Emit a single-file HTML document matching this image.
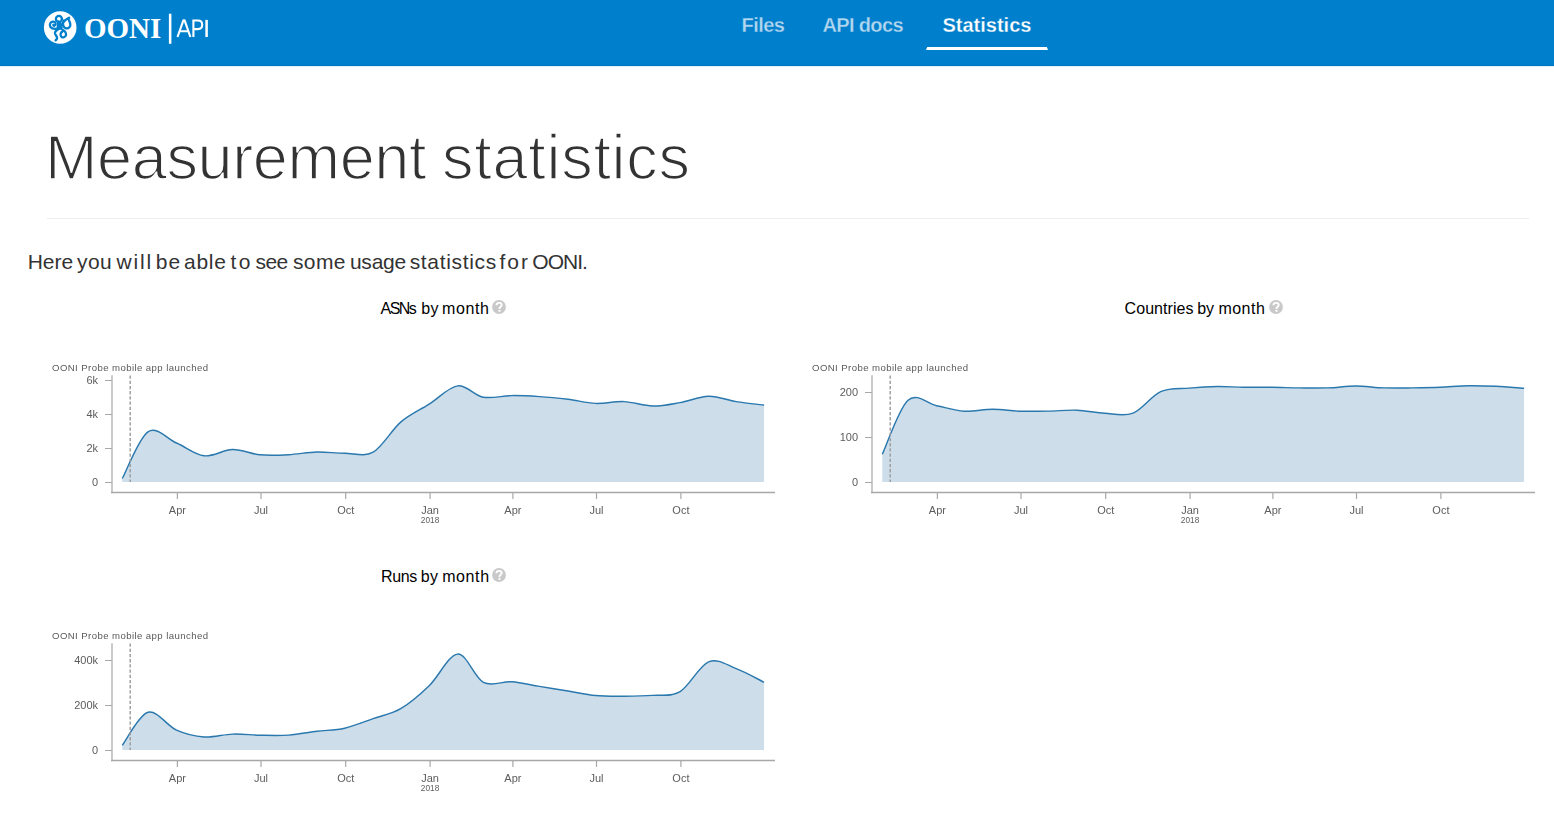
<!DOCTYPE html>
<html><head><meta charset="utf-8">
<style>
html,body{margin:0;padding:0;background:#fff;width:1554px;height:820px;overflow:hidden;position:relative;}
body{font-family:"Liberation Sans",sans-serif;}
.hdr{position:absolute;left:0;top:0;width:1554px;height:66px;background:#0080cc;}
.abs{position:absolute;white-space:nowrap;}
.nav{font-family:"Liberation Sans",sans-serif;font-weight:bold;font-size:20px;line-height:20px;color:#b3d7ef;-webkit-text-stroke:0.3px #0080cc;transform-origin:0 0;}
.ul{position:absolute;left:926px;top:47px;width:122px;height:3px;background:#fff;clip-path:polygon(1.2px 0,120.8px 0,122px 3px,0 3px);}
.title{font-size:63px;line-height:64px;color:#333;-webkit-text-stroke:1.6px #fff;}
.hr{position:absolute;left:47px;top:218px;width:1482px;height:1px;background:#eee;}
.intro{font-size:21px;line-height:21px;color:#333;}
.ct{font-size:16px;line-height:16px;color:#000;}
.q{position:absolute;width:14px;height:14px;}
svg text{font-family:"Liberation Sans",sans-serif;}
.tl{font-size:11px;fill:#5c5c5c;}
.ty{font-size:8.3px;fill:#5c5c5c;}
.ta{font-size:9.6px;fill:#5a5a5a;}
</style></head><body>
<div class="hdr"></div><div style="position:absolute;left:0;top:65px;width:1554px;height:1px;background:#0075c4"></div><div style="position:absolute;left:0;top:66px;width:1554px;height:1px;background:#e3f0f9"></div>
<svg class="abs" style="left:0;top:0" width="1554" height="66" viewBox="0 0 1554 66">

<circle cx="60.2" cy="27.5" r="16.3" fill="#fff"/>
<g fill="none" stroke="#0080cc" stroke-width="2.3" stroke-linecap="round">
<circle cx="58.9" cy="18.9" r="3.0"/>
<path d="M58.2,21.5 C57.8,24 59.5,25.5 59.8,28"/>
<path d="M59.5,27.8 C57,29.2 52.5,29.6 50.5,27 C48.8,24.6 50.6,21.3 53.5,21.6 C56,21.9 56.3,24.6 54.6,25.6 C53.8,26 53.2,25.4 53.4,24.8"/>
<path d="M60.8,26 C62.5,24 63.5,21.5 65.5,20 C67,19 68,18.5 69.2,17.8 M63.6,20.5 C62.4,23.5 63,27.4 65.8,28.3 C68.8,29 71,26.5 70.2,23.5 C69.6,21.5 68.6,20 68.6,18.8"/>
<path d="M59.5,28.5 C57,29.8 54.5,31 55,33.5 C55.5,35.5 57.5,36.2 57,38.5 C56.8,39.5 56,40 55.5,40.4"/>
<path d="M60.5,28.5 C63.8,30 66.5,32 66,35 C65.5,37.8 62,38.2 61,36.2 C60,34.2 60.8,32.4 62.4,31.6"/>
</g>
<path d="M57,22 L61.3,22 L62.8,27.5 C62.8,29.5 56.6,29.5 56.6,27.5 Z" fill="#0080cc"/>

<text x="84" y="37.7" style="font-family:'Liberation Serif',serif;font-weight:bold;font-size:29px" fill="#fff">OONI</text>
<rect x="168.9" y="13.7" width="2.5" height="30.1" fill="#fff"/>
<g fill="none" stroke="#fff" stroke-width="2.1">
<path d="M177.5,37 L183.4,20.3 H184.6 L190.4,37 M180.2,31.2 H187.6" stroke-linejoin="round"/>
<path d="M193.4,37 V20.5 H197.8 C200.6,20.5 202.2,22.2 202.2,24.8 C202.2,27.4 200.6,29.1 197.8,29.1 H193.4"/>
<path d="M206.6,19.9 V37" stroke-width="2.5"/>
</g>
</svg>
<div class="abs nav" id="n1" style="left:741.5px;top:15px;letter-spacing:-0.55px">Files</div>
<div class="abs nav" id="n2" style="left:822.5px;top:15px;letter-spacing:-0.65px">API docs</div>
<div class="abs nav" id="n3" style="left:942.5px;top:15px;color:#fff;letter-spacing:0px">Statistics</div>
<div class="ul"></div>
<div class="abs title" id="ttl" style="left:45px;top:124.5px"><span style="letter-spacing:-0.37px">Measurement</span> <span style="letter-spacing:0.72px;margin-left:-1.6px">statistics</span></div>
<div class="hr"></div>
<span class="abs intro" style="left:27.7px;top:251px;letter-spacing:0.00px">Here</span><span class="abs intro" style="left:77.0px;top:251px;letter-spacing:0.40px">you</span><span class="abs intro" style="left:116.5px;top:251px;letter-spacing:1.83px">will</span><span class="abs intro" style="left:155.7px;top:251px;letter-spacing:1.20px">be</span><span class="abs intro" style="left:184.0px;top:251px;letter-spacing:0.73px">able</span><span class="abs intro" style="left:230.4px;top:251px;letter-spacing:2.40px">to</span><span class="abs intro" style="left:255.5px;top:251px;letter-spacing:-0.55px">see</span><span class="abs intro" style="left:293.0px;top:251px;letter-spacing:0.37px">some</span><span class="abs intro" style="left:349.9px;top:251px;letter-spacing:-0.22px">usage</span><span class="abs intro" style="left:409.7px;top:251px;letter-spacing:0.67px">statistics</span><span class="abs intro" style="left:499.5px;top:251px;letter-spacing:2.00px">for</span><span class="abs intro" style="left:532.3px;top:251px;letter-spacing:-0.98px">OONI.</span>
<span class="abs ct" style="left:380.6px;top:301.2px;letter-spacing:-1.60px">ASNs</span><span class="abs ct" style="left:421.2px;top:301.2px;letter-spacing:0.50px">by</span><span class="abs ct" style="left:442.0px;top:301.2px;letter-spacing:0.62px">month</span>
<div class="q" style="left:492.2px;top:300.2px"><svg width="14" height="14" viewBox="0 0 14 14" style="display:block"><circle cx="7" cy="7" r="6.9" fill="#c9c9c9"/><path d="M4.5,5.2 C4.5,3.6 5.7,2.9 7.1,2.9 C8.6,2.9 9.7,3.8 9.7,5 C9.7,6.5 7.6,6.8 7.5,8.3 V9" fill="none" stroke="#fff" stroke-width="1.9"/><rect x="6.5" y="9.9" width="2" height="1.9" fill="#fff"/></svg></div>
<span class="abs ct" style="left:1124.6px;top:301.2px;letter-spacing:0.05px">Countries</span><span class="abs ct" style="left:1197.2px;top:301.2px;letter-spacing:0.00px">by</span><span class="abs ct" style="left:1218.4px;top:301.2px;letter-spacing:0.50px">month</span>
<div class="q" style="left:1268.5px;top:300.2px"><svg width="14" height="14" viewBox="0 0 14 14" style="display:block"><circle cx="7" cy="7" r="6.9" fill="#c9c9c9"/><path d="M4.5,5.2 C4.5,3.6 5.7,2.9 7.1,2.9 C8.6,2.9 9.7,3.8 9.7,5 C9.7,6.5 7.6,6.8 7.5,8.3 V9" fill="none" stroke="#fff" stroke-width="1.9"/><rect x="6.5" y="9.9" width="2" height="1.9" fill="#fff"/></svg></div>
<span class="abs ct" style="left:381.1px;top:569.2px;letter-spacing:-0.43px">Runs</span><span class="abs ct" style="left:420.8px;top:569.2px;letter-spacing:0.40px">by</span><span class="abs ct" style="left:442.2px;top:569.2px;letter-spacing:0.60px">month</span>
<div class="q" style="left:492.2px;top:568.2px"><svg width="14" height="14" viewBox="0 0 14 14" style="display:block"><circle cx="7" cy="7" r="6.9" fill="#c9c9c9"/><path d="M4.5,5.2 C4.5,3.6 5.7,2.9 7.1,2.9 C8.6,2.9 9.7,3.8 9.7,5 C9.7,6.5 7.6,6.8 7.5,8.3 V9" fill="none" stroke="#fff" stroke-width="1.9"/><rect x="6.5" y="9.9" width="2" height="1.9" fill="#fff"/></svg></div>
<svg class="abs" style="left:0;top:0;will-change:transform" width="1554" height="820" viewBox="0 0 1554 820">
<path d="M122.3,478.5 C126.6,470.7 139.0,437.7 148.0,431.8 C157.0,425.9 167.2,439.0 176.5,443.0 C185.8,447.0 194.7,454.7 204.0,455.8 C213.3,456.9 223.2,449.7 232.5,449.5 C241.8,449.3 250.8,453.9 260.1,454.8 C269.5,455.7 279.1,455.2 288.6,454.7 C298.1,454.2 307.8,452.2 317.1,452.0 C326.5,451.8 335.4,453.3 344.7,453.3 C354.0,453.3 363.8,457.4 373.1,452.2 C382.4,447.0 391.4,430.1 400.7,422.1 C410.0,414.1 419.7,410.1 429.2,404.1 C438.7,398.1 448.7,387.0 457.7,385.9 C466.7,384.8 474.4,395.6 483.4,397.2 C492.4,398.8 502.5,395.7 511.9,395.6 C521.2,395.5 530.1,396.0 539.5,396.6 C548.9,397.2 558.7,398.2 568.0,399.3 C577.3,400.4 586.2,403.0 595.5,403.4 C604.8,403.8 614.5,401.2 624.0,401.6 C633.5,402.0 643.1,405.8 652.5,406.0 C661.9,406.2 670.8,404.2 680.1,402.6 C689.5,401.0 699.2,396.5 708.6,396.3 C718.0,396.1 727.0,400.1 736.2,401.6 C745.5,403.1 759.5,404.5 764.1,405.1 L764.1,482.0 L122.3,482.0 Z" fill="#cddeea"/>
<path d="M122.3,478.5 C126.6,470.7 139.0,437.7 148.0,431.8 C157.0,425.9 167.2,439.0 176.5,443.0 C185.8,447.0 194.7,454.7 204.0,455.8 C213.3,456.9 223.2,449.7 232.5,449.5 C241.8,449.3 250.8,453.9 260.1,454.8 C269.5,455.7 279.1,455.2 288.6,454.7 C298.1,454.2 307.8,452.2 317.1,452.0 C326.5,451.8 335.4,453.3 344.7,453.3 C354.0,453.3 363.8,457.4 373.1,452.2 C382.4,447.0 391.4,430.1 400.7,422.1 C410.0,414.1 419.7,410.1 429.2,404.1 C438.7,398.1 448.7,387.0 457.7,385.9 C466.7,384.8 474.4,395.6 483.4,397.2 C492.4,398.8 502.5,395.7 511.9,395.6 C521.2,395.5 530.1,396.0 539.5,396.6 C548.9,397.2 558.7,398.2 568.0,399.3 C577.3,400.4 586.2,403.0 595.5,403.4 C604.8,403.8 614.5,401.2 624.0,401.6 C633.5,402.0 643.1,405.8 652.5,406.0 C661.9,406.2 670.8,404.2 680.1,402.6 C689.5,401.0 699.2,396.5 708.6,396.3 C718.0,396.1 727.0,400.1 736.2,401.6 C745.5,403.1 759.5,404.5 764.1,405.1" fill="none" stroke="#2a78ae" stroke-width="1.45"/>
<line x1="112" y1="375.3" x2="112" y2="493.2" stroke="#bdbdbd" stroke-width="1.6"/>
<line x1="111" y1="492.5" x2="775" y2="492.5" stroke="#a8a8a8" stroke-width="1.3"/>
<line x1="105" y1="380.5" x2="112" y2="380.5" stroke="#a8a8a8" stroke-width="1"/>
<text x="98" y="384.1" text-anchor="end" class="tl">6k</text>
<line x1="105" y1="414.5" x2="112" y2="414.5" stroke="#a8a8a8" stroke-width="1"/>
<text x="98" y="418.1" text-anchor="end" class="tl">4k</text>
<line x1="105" y1="448.5" x2="112" y2="448.5" stroke="#a8a8a8" stroke-width="1"/>
<text x="98" y="452.1" text-anchor="end" class="tl">2k</text>
<line x1="105" y1="482.5" x2="112" y2="482.5" stroke="#a8a8a8" stroke-width="1"/>
<text x="98" y="486.1" text-anchor="end" class="tl">0</text>
<line x1="177.4" y1="493.0" x2="177.4" y2="499.0" stroke="#a8a8a8" stroke-width="1.2"/>
<text x="177.4" y="514.0" text-anchor="middle" class="tl">Apr</text>
<line x1="261.0" y1="493.0" x2="261.0" y2="499.0" stroke="#a8a8a8" stroke-width="1.2"/>
<text x="261.0" y="514.0" text-anchor="middle" class="tl">Jul</text>
<line x1="345.7" y1="493.0" x2="345.7" y2="499.0" stroke="#a8a8a8" stroke-width="1.2"/>
<text x="345.7" y="514.0" text-anchor="middle" class="tl">Oct</text>
<line x1="430.1" y1="493.0" x2="430.1" y2="499.0" stroke="#a8a8a8" stroke-width="1.2"/>
<text x="430.1" y="514.0" text-anchor="middle" class="tl">Jan</text>
<line x1="512.9" y1="493.0" x2="512.9" y2="499.0" stroke="#a8a8a8" stroke-width="1.2"/>
<text x="512.9" y="514.0" text-anchor="middle" class="tl">Apr</text>
<line x1="596.5" y1="493.0" x2="596.5" y2="499.0" stroke="#a8a8a8" stroke-width="1.2"/>
<text x="596.5" y="514.0" text-anchor="middle" class="tl">Jul</text>
<line x1="680.9" y1="493.0" x2="680.9" y2="499.0" stroke="#a8a8a8" stroke-width="1.2"/>
<text x="680.9" y="514.0" text-anchor="middle" class="tl">Oct</text>
<text x="430.1" y="522.9" text-anchor="middle" class="ty">2018</text>
<line x1="130.2" y1="375.5" x2="130.2" y2="482.0" stroke="#9a9a9a" stroke-width="1.4" stroke-dasharray="3.3,1.9"/>
<text x="52.0" y="370.9" class="ta" textLength="156" lengthAdjust="spacing">OONI Probe mobile app launched</text>
<path d="M882.3,454.2 C886.6,445.2 899.0,408.3 908.0,400.2 C917.0,392.1 927.2,403.9 936.5,405.7 C945.8,407.5 954.7,410.6 964.0,411.2 C973.3,411.8 983.1,409.3 992.5,409.3 C1001.9,409.3 1010.8,410.9 1020.1,411.2 C1029.5,411.5 1039.1,411.3 1048.6,411.1 C1058.1,410.9 1067.8,409.8 1077.1,410.2 C1086.4,410.6 1095.4,412.8 1104.7,413.3 C1114.0,413.8 1123.8,416.7 1133.1,413.1 C1142.4,409.5 1151.3,395.8 1160.7,391.6 C1170.1,387.4 1179.7,389.0 1189.2,388.1 C1198.7,387.2 1208.7,386.6 1217.7,386.5 C1226.7,386.4 1234.4,387.2 1243.4,387.3 C1252.4,387.4 1262.6,387.2 1271.9,387.3 C1281.2,387.4 1290.2,387.8 1299.5,387.9 C1308.8,388.0 1318.7,388.2 1328.0,387.9 C1337.3,387.6 1346.2,385.9 1355.5,385.9 C1364.8,385.9 1374.5,387.6 1384.0,387.9 C1393.5,388.2 1403.2,388.0 1412.5,387.9 C1421.8,387.8 1430.8,387.7 1440.1,387.3 C1449.4,386.9 1459.2,385.9 1468.6,385.7 C1477.9,385.5 1487.0,385.9 1496.2,386.3 C1505.5,386.7 1519.4,388.0 1524.1,388.3 L1524.1,482.0 L882.3,482.0 Z" fill="#cddeea"/>
<path d="M882.3,454.2 C886.6,445.2 899.0,408.3 908.0,400.2 C917.0,392.1 927.2,403.9 936.5,405.7 C945.8,407.5 954.7,410.6 964.0,411.2 C973.3,411.8 983.1,409.3 992.5,409.3 C1001.9,409.3 1010.8,410.9 1020.1,411.2 C1029.5,411.5 1039.1,411.3 1048.6,411.1 C1058.1,410.9 1067.8,409.8 1077.1,410.2 C1086.4,410.6 1095.4,412.8 1104.7,413.3 C1114.0,413.8 1123.8,416.7 1133.1,413.1 C1142.4,409.5 1151.3,395.8 1160.7,391.6 C1170.1,387.4 1179.7,389.0 1189.2,388.1 C1198.7,387.2 1208.7,386.6 1217.7,386.5 C1226.7,386.4 1234.4,387.2 1243.4,387.3 C1252.4,387.4 1262.6,387.2 1271.9,387.3 C1281.2,387.4 1290.2,387.8 1299.5,387.9 C1308.8,388.0 1318.7,388.2 1328.0,387.9 C1337.3,387.6 1346.2,385.9 1355.5,385.9 C1364.8,385.9 1374.5,387.6 1384.0,387.9 C1393.5,388.2 1403.2,388.0 1412.5,387.9 C1421.8,387.8 1430.8,387.7 1440.1,387.3 C1449.4,386.9 1459.2,385.9 1468.6,385.7 C1477.9,385.5 1487.0,385.9 1496.2,386.3 C1505.5,386.7 1519.4,388.0 1524.1,388.3" fill="none" stroke="#2a78ae" stroke-width="1.45"/>
<line x1="872" y1="375.3" x2="872" y2="493.2" stroke="#bdbdbd" stroke-width="1.6"/>
<line x1="871" y1="492.5" x2="1535" y2="492.5" stroke="#a8a8a8" stroke-width="1.3"/>
<line x1="865" y1="392.5" x2="872" y2="392.5" stroke="#a8a8a8" stroke-width="1"/>
<text x="858" y="396.1" text-anchor="end" class="tl">200</text>
<line x1="865" y1="437.5" x2="872" y2="437.5" stroke="#a8a8a8" stroke-width="1"/>
<text x="858" y="441.1" text-anchor="end" class="tl">100</text>
<line x1="865" y1="482.5" x2="872" y2="482.5" stroke="#a8a8a8" stroke-width="1"/>
<text x="858" y="486.1" text-anchor="end" class="tl">0</text>
<line x1="937.4" y1="493.0" x2="937.4" y2="499.0" stroke="#a8a8a8" stroke-width="1.2"/>
<text x="937.4" y="514.0" text-anchor="middle" class="tl">Apr</text>
<line x1="1021.0" y1="493.0" x2="1021.0" y2="499.0" stroke="#a8a8a8" stroke-width="1.2"/>
<text x="1021.0" y="514.0" text-anchor="middle" class="tl">Jul</text>
<line x1="1105.7" y1="493.0" x2="1105.7" y2="499.0" stroke="#a8a8a8" stroke-width="1.2"/>
<text x="1105.7" y="514.0" text-anchor="middle" class="tl">Oct</text>
<line x1="1190.1" y1="493.0" x2="1190.1" y2="499.0" stroke="#a8a8a8" stroke-width="1.2"/>
<text x="1190.1" y="514.0" text-anchor="middle" class="tl">Jan</text>
<line x1="1272.9" y1="493.0" x2="1272.9" y2="499.0" stroke="#a8a8a8" stroke-width="1.2"/>
<text x="1272.9" y="514.0" text-anchor="middle" class="tl">Apr</text>
<line x1="1356.5" y1="493.0" x2="1356.5" y2="499.0" stroke="#a8a8a8" stroke-width="1.2"/>
<text x="1356.5" y="514.0" text-anchor="middle" class="tl">Jul</text>
<line x1="1440.9" y1="493.0" x2="1440.9" y2="499.0" stroke="#a8a8a8" stroke-width="1.2"/>
<text x="1440.9" y="514.0" text-anchor="middle" class="tl">Oct</text>
<text x="1190.1" y="522.9" text-anchor="middle" class="ty">2018</text>
<line x1="890.2" y1="375.5" x2="890.2" y2="482.0" stroke="#9a9a9a" stroke-width="1.4" stroke-dasharray="3.3,1.9"/>
<text x="812.0" y="370.9" class="ta" textLength="156" lengthAdjust="spacing">OONI Probe mobile app launched</text>
<path d="M122.3,745.2 C126.6,739.7 139.0,714.8 148.0,712.3 C157.0,709.8 167.2,726.0 176.5,730.1 C185.8,734.2 194.7,736.3 204.0,737.0 C213.3,737.7 223.2,734.4 232.5,734.1 C241.8,733.8 250.8,735.0 260.1,735.2 C269.5,735.4 279.1,735.8 288.6,735.1 C298.1,734.4 307.8,732.4 317.1,731.2 C326.5,730.1 335.4,730.3 344.7,728.2 C354.0,726.1 363.8,721.9 373.1,718.6 C382.4,715.4 391.4,714.2 400.7,708.7 C410.0,703.2 419.7,694.8 429.2,685.7 C438.7,676.6 448.7,654.7 457.7,654.1 C466.7,653.5 474.4,677.8 483.4,682.4 C492.4,687.0 502.5,681.0 511.9,681.7 C521.2,682.4 530.1,684.9 539.5,686.4 C548.9,687.9 558.7,689.5 568.0,691.0 C577.3,692.5 586.2,694.6 595.5,695.5 C604.8,696.4 614.5,696.2 624.0,696.2 C633.5,696.2 643.1,696.2 652.5,695.4 C661.9,694.6 670.8,697.2 680.1,691.6 C689.5,686.0 699.2,665.6 708.6,661.8 C718.0,658.0 727.0,665.2 736.2,668.6 C745.5,672.0 759.5,680.0 764.1,682.3 L764.1,750.0 L122.3,750.0 Z" fill="#cddeea"/>
<path d="M122.3,745.2 C126.6,739.7 139.0,714.8 148.0,712.3 C157.0,709.8 167.2,726.0 176.5,730.1 C185.8,734.2 194.7,736.3 204.0,737.0 C213.3,737.7 223.2,734.4 232.5,734.1 C241.8,733.8 250.8,735.0 260.1,735.2 C269.5,735.4 279.1,735.8 288.6,735.1 C298.1,734.4 307.8,732.4 317.1,731.2 C326.5,730.1 335.4,730.3 344.7,728.2 C354.0,726.1 363.8,721.9 373.1,718.6 C382.4,715.4 391.4,714.2 400.7,708.7 C410.0,703.2 419.7,694.8 429.2,685.7 C438.7,676.6 448.7,654.7 457.7,654.1 C466.7,653.5 474.4,677.8 483.4,682.4 C492.4,687.0 502.5,681.0 511.9,681.7 C521.2,682.4 530.1,684.9 539.5,686.4 C548.9,687.9 558.7,689.5 568.0,691.0 C577.3,692.5 586.2,694.6 595.5,695.5 C604.8,696.4 614.5,696.2 624.0,696.2 C633.5,696.2 643.1,696.2 652.5,695.4 C661.9,694.6 670.8,697.2 680.1,691.6 C689.5,686.0 699.2,665.6 708.6,661.8 C718.0,658.0 727.0,665.2 736.2,668.6 C745.5,672.0 759.5,680.0 764.1,682.3" fill="none" stroke="#2a78ae" stroke-width="1.45"/>
<line x1="112" y1="643.3" x2="112" y2="761.2" stroke="#bdbdbd" stroke-width="1.6"/>
<line x1="111" y1="760.5" x2="775" y2="760.5" stroke="#a8a8a8" stroke-width="1.3"/>
<line x1="105" y1="660.5" x2="112" y2="660.5" stroke="#a8a8a8" stroke-width="1"/>
<text x="98" y="664.1" text-anchor="end" class="tl">400k</text>
<line x1="105" y1="705.5" x2="112" y2="705.5" stroke="#a8a8a8" stroke-width="1"/>
<text x="98" y="709.1" text-anchor="end" class="tl">200k</text>
<line x1="105" y1="750.5" x2="112" y2="750.5" stroke="#a8a8a8" stroke-width="1"/>
<text x="98" y="754.1" text-anchor="end" class="tl">0</text>
<line x1="177.4" y1="761.0" x2="177.4" y2="767.0" stroke="#a8a8a8" stroke-width="1.2"/>
<text x="177.4" y="782.0" text-anchor="middle" class="tl">Apr</text>
<line x1="261.0" y1="761.0" x2="261.0" y2="767.0" stroke="#a8a8a8" stroke-width="1.2"/>
<text x="261.0" y="782.0" text-anchor="middle" class="tl">Jul</text>
<line x1="345.7" y1="761.0" x2="345.7" y2="767.0" stroke="#a8a8a8" stroke-width="1.2"/>
<text x="345.7" y="782.0" text-anchor="middle" class="tl">Oct</text>
<line x1="430.1" y1="761.0" x2="430.1" y2="767.0" stroke="#a8a8a8" stroke-width="1.2"/>
<text x="430.1" y="782.0" text-anchor="middle" class="tl">Jan</text>
<line x1="512.9" y1="761.0" x2="512.9" y2="767.0" stroke="#a8a8a8" stroke-width="1.2"/>
<text x="512.9" y="782.0" text-anchor="middle" class="tl">Apr</text>
<line x1="596.5" y1="761.0" x2="596.5" y2="767.0" stroke="#a8a8a8" stroke-width="1.2"/>
<text x="596.5" y="782.0" text-anchor="middle" class="tl">Jul</text>
<line x1="680.9" y1="761.0" x2="680.9" y2="767.0" stroke="#a8a8a8" stroke-width="1.2"/>
<text x="680.9" y="782.0" text-anchor="middle" class="tl">Oct</text>
<text x="430.1" y="790.9" text-anchor="middle" class="ty">2018</text>
<line x1="130.2" y1="643.5" x2="130.2" y2="750.0" stroke="#9a9a9a" stroke-width="1.4" stroke-dasharray="3.3,1.9"/>
<text x="52.0" y="638.9" class="ta" textLength="156" lengthAdjust="spacing">OONI Probe mobile app launched</text>
</svg>
</body></html>
